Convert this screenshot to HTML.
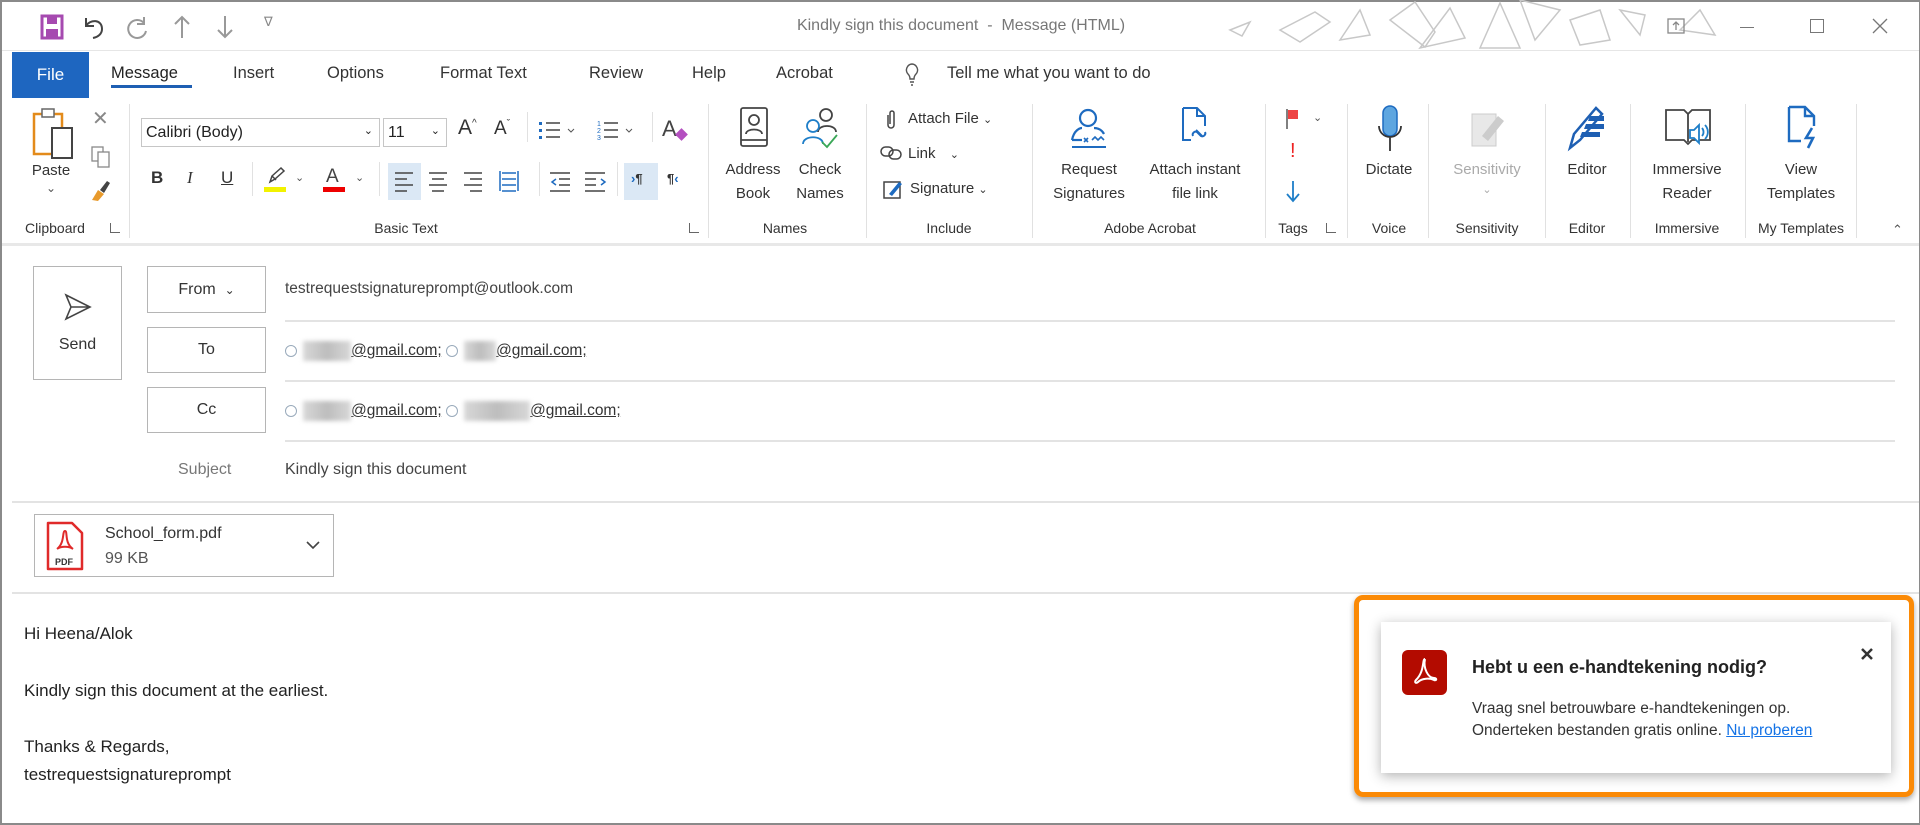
<!DOCTYPE html>
<html><head><meta charset="utf-8">
<style>
*{margin:0;padding:0;box-sizing:border-box}
body{width:1920px;height:825px;overflow:hidden;background:#fff;font-family:"Liberation Sans",sans-serif;color:#262626;position:relative}
.a{position:absolute;white-space:nowrap}
.c{transform:translateX(-50%);text-align:center}
.t{font-size:16.5px;color:#333;top:64px}
.rl{font-size:15px;color:#333;line-height:24px}
.gl{font-size:14px;color:#333;top:220px}
.sep{position:absolute;width:1px;background:#e1e1e1;top:104px;height:134px}
.hl{position:absolute;height:2px;background:#e3e3e3}
.box{position:absolute;border:1px solid #b5b5b5;background:#fff;font-size:16px;color:#333;display:flex;align-items:center;justify-content:center}
.blur{display:inline-block;height:20px;background:linear-gradient(90deg,#d8d8d8,#bdbdbd,#d8d8d8);filter:blur(2px);vertical-align:middle}
.rc{display:inline-block;width:12px;height:12px;border:1px solid #9ab;border-radius:50%;vertical-align:middle;margin-right:6px}
.em{text-decoration:underline;color:#333}
</style></head><body>
<div class="a" style="left:0;top:0;width:1920px;height:825px;border:2px solid #8a8a8a;border-right-width:1px"></div>

<svg class="a" style="left:40px;top:14px" width="24" height="26" viewBox="0 0 24 26"><rect x="2" y="2" width="20" height="22" fill="#fff" stroke="#a64ab0" stroke-width="3"/><rect x="7" y="3" width="10" height="7" fill="#a64ab0"/><rect x="6" y="15" width="12" height="8" fill="#a64ab0"/></svg>
<svg class="a" style="left:82px;top:14px" width="24" height="26" viewBox="0 0 24 26" fill="none" stroke="#444" stroke-width="2"><path d="M4 4v8h8"/><path d="M4 12c4-7 16-7 16 3 0 5-4 8-9 9"/></svg>
<svg class="a" style="left:126px;top:14px" width="24" height="26" viewBox="0 0 24 26" fill="none" stroke="#999" stroke-width="2"><path d="M18 3v7h-7"/><path d="M18 9A9 9 0 1 0 20 17"/></svg>
<svg class="a" style="left:172px;top:14px" width="20" height="26" viewBox="0 0 20 26" fill="none" stroke="#999" stroke-width="2"><path d="M10 24V3M3 10l7-7 7 7"/></svg>
<svg class="a" style="left:215px;top:14px" width="20" height="26" viewBox="0 0 20 26" fill="none" stroke="#999" stroke-width="2"><path d="M10 2v21M3 16l7 7 7-7"/></svg>
<div class="a" style="left:264px;top:14px;font-size:13px;color:#888">&#8711;</div>
<div class="a c" style="left:961px;top:17px;font-size:16px;color:#777">Kindly sign this document &nbsp;- &nbsp;Message (HTML)</div>
<svg class="a" style="left:1220px;top:0" width="640" height="50" viewBox="0 0 640 50" fill="none" stroke="#c8c8c8" stroke-width="1.5"><path d="M10 30l20-8-8 14zM60 30l35-18 15 10-30 20zM120 40l20-30 10 25zM170 20l25-18 20 30-10 15z"/><path d="M260 48l20-45 20 45zM300 0l15 40 25-30zM200 48l30-40 15 30z"/><path d="M350 20l30-10 10 30-30 5zM400 10l25 5-5 20zM460 30l20-20 15 25z"/></svg>
<svg class="a" style="left:1666px;top:16px" width="20" height="20" viewBox="0 0 20 20" fill="none" stroke="#888" stroke-width="1.3"><rect x="2" y="3" width="16" height="14"/><path d="M10 14V6M7 9l3-3 3 3"/></svg>
<div class="a" style="left:1740px;top:27px;width:14px;height:1px;background:#777"></div>
<div class="a" style="left:1810px;top:19px;width:14px;height:14px;border:1px solid #777"></div>
<svg class="a" style="left:1872px;top:18px" width="16" height="16" viewBox="0 0 16 16" stroke="#777" stroke-width="1.3"><path d="M1 1l14 14M15 1L1 15"/></svg>
<div class="hl" style="left:2px;top:50px;width:1917px;height:1px;background:#e6e6e6"></div>

<div class="a" style="left:12px;top:52px;width:77px;height:46px;background:#1e66c0;color:#fff;font-size:17px;display:flex;align-items:center;justify-content:center">File</div>
<div class="a t" style="left:111px;color:#222">Message</div>
<div class="a" style="left:111px;top:85px;width:81px;height:3px;background:#1e5fb3"></div>
<div class="a t" style="left:233px">Insert</div>
<div class="a t" style="left:327px">Options</div>
<div class="a t" style="left:440px">Format Text</div>
<div class="a t" style="left:589px">Review</div>
<div class="a t" style="left:692px">Help</div>
<div class="a t" style="left:776px">Acrobat</div>
<svg class="a" style="left:903px;top:62px" width="18" height="24" viewBox="0 0 18 24" fill="none" stroke="#555" stroke-width="1.4"><path d="M9 2a6 6 0 0 0-4 10c1 1 2 3 2 5h4c0-2 1-4 2-5A6 6 0 0 0 9 2zM7 20h4M8 23h2"/></svg>
<div class="a t" style="left:947px">Tell me what you want to do</div>

<svg class="a" style="left:32px;top:106px" width="46" height="56" viewBox="0 0 46 56" fill="none"><rect x="2" y="8" width="28" height="40" stroke="#e38b1b" stroke-width="2.5"/><rect x="10" y="3" width="12" height="8" fill="#fff" stroke="#666" stroke-width="1.5"/><rect x="20" y="22" width="20" height="30" fill="#fff" stroke="#444" stroke-width="2"/></svg>
<div class="a rl c" style="left:51px;top:159px">Paste</div>
<div class="a c" style="left:51px;top:181px;font-size:12px;color:#555">&#8964;</div>
<div class="a" style="left:92px;top:106px;font-size:20px;color:#888">&#10005;</div>
<svg class="a" style="left:90px;top:145px" width="22" height="24" viewBox="0 0 22 24" fill="none" stroke="#888" stroke-width="1.3"><rect x="2" y="2" width="11" height="14"/><rect x="8" y="7" width="11" height="15" fill="#fff"/></svg>
<svg class="a" style="left:88px;top:178px" width="24" height="24" viewBox="0 0 24 24"><path d="M4 22l6-10 6 4-6 7z" fill="#e89a2c"/><path d="M12 12l7-9 3 2-6 10z" fill="#444"/></svg>
<div class="a gl c" style="left:55px">Clipboard</div>
<div class="a" style="left:110px;top:223px;width:10px;height:10px;border-left:1px solid #666;border-bottom:1px solid #666"></div>
<div class="sep" style="left:129px"></div>

<div class="a" style="left:141px;top:118px;width:239px;height:29px;border:1px solid #c6c6c6;font-size:16px;padding:5px 4px;color:#222">Calibri (Body)<span style="position:absolute;right:6px;top:5px;font-size:11px">&#8964;</span></div>
<div class="a" style="left:383px;top:118px;width:64px;height:29px;border:1px solid #c6c6c6;font-size:16px;padding:5px 4px;color:#222">11<span style="position:absolute;right:6px;top:5px;font-size:11px">&#8964;</span></div>
<div class="a" style="left:458px;top:116px;font-size:21px;color:#333">A<sup style="font-size:10px">^</sup></div>
<div class="a" style="left:494px;top:118px;font-size:19px;color:#333">A<sup style="font-size:10px">&#711;</sup></div>
<div class="sep" style="left:527px;top:112px;height:30px"></div>
<svg class="a" style="left:538px;top:118px" width="40" height="26" viewBox="0 0 40 26"><g fill="#1e6bc0"><rect x="1" y="4" width="3" height="3"/><rect x="1" y="11" width="3" height="3"/><rect x="1" y="18" width="3" height="3"/></g><g stroke="#444" stroke-width="1.5"><path d="M8 5h14M8 12h14M8 19h14"/></g><path d="M30 11l3 3 3-3" stroke="#555" fill="none"/></svg>
<svg class="a" style="left:596px;top:118px" width="40" height="26" viewBox="0 0 40 26"><g fill="#1e6bc0" font-size="7" font-family="Liberation Sans"><text x="1" y="8">1</text><text x="1" y="15">2</text><text x="1" y="22">3</text></g><g stroke="#444" stroke-width="1.5"><path d="M8 5h14M8 12h14M8 19h14"/></g><path d="M30 11l3 3 3-3" stroke="#555" fill="none"/></svg>
<div class="sep" style="left:652px;top:112px;height:30px"></div>
<div class="a" style="left:662px;top:116px;font-size:22px;color:#444">A</div>
<div class="a" style="left:677px;top:130px;width:9px;height:9px;background:#b44fc0;transform:rotate(45deg)"></div>

<div class="a" style="left:151px;top:168px;font-size:17px;font-weight:bold;color:#333">B</div>
<div class="a" style="left:187px;top:168px;font-size:17px;font-style:italic;font-family:'Liberation Serif',serif;color:#333">I</div>
<div class="a" style="left:221px;top:168px;font-size:17px;text-decoration:underline;color:#333">U</div>
<div class="sep" style="left:252px;top:162px;height:34px"></div>
<svg class="a" style="left:264px;top:166px" width="22" height="20" viewBox="0 0 22 20" fill="none" stroke="#444" stroke-width="1.5"><path d="M6 16l2-6 9-8 3 3-9 8zM8 10l4 4"/></svg>
<div class="a" style="left:264px;top:187px;width:22px;height:5px;background:#f2f200"></div>
<div class="a" style="left:295px;top:171px;font-size:11px;color:#555">&#8964;</div>
<div class="a" style="left:326px;top:166px;font-size:19px;color:#444">A</div>
<div class="a" style="left:323px;top:187px;width:22px;height:5px;background:#e00"></div>
<div class="a" style="left:355px;top:171px;font-size:11px;color:#555">&#8964;</div>
<div class="sep" style="left:379px;top:162px;height:34px"></div>
<div class="a" style="left:388px;top:163px;width:33px;height:37px;background:#dbe8f5"></div>
<svg class="a" style="left:394px;top:170px" width="140" height="22" viewBox="0 0 140 22" stroke="#444" stroke-width="1.5"><path d="M1 3h18M1 9h12M1 15h18M1 21h12"/><path d="M35 3h18M38 9h12M35 15h18M38 21h12"/><path d="M70 3h18M76 9h12M70 15h18M76 21h12"/><path d="M106 1v20M124 1v20M108 3h14M108 9h14M108 15h14M108 21h14" stroke="#1e6bc0"/></svg>
<div class="sep" style="left:539px;top:162px;height:34px"></div>
<svg class="a" style="left:549px;top:170px" width="60" height="22" viewBox="0 0 60 22" stroke="#444" stroke-width="1.5" fill="none"><path d="M1 3h20M10 9h11M10 15h11M1 21h20"/><path d="M7 9l-4 3 4 3" stroke="#1e6bc0"/><path d="M36 3h20M36 9h11M36 15h11M36 21h20"/><path d="M52 9l4 3-4 3" stroke="#1e6bc0"/></svg>
<div class="sep" style="left:617px;top:162px;height:34px"></div>
<div class="a" style="left:624px;top:163px;width:34px;height:37px;background:#dbe8f5"></div>
<div class="a" style="left:631px;top:171px;font-size:13px;color:#1e6bc0;font-weight:bold">&rsaquo;<span style="color:#333">&para;</span></div>
<div class="a" style="left:667px;top:171px;font-size:13px;color:#333;font-weight:bold">&para;<span style="color:#1e6bc0">&lsaquo;</span></div>
<div class="a gl c" style="left:406px">Basic Text</div>
<div class="a" style="left:689px;top:223px;width:10px;height:10px;border-left:1px solid #666;border-bottom:1px solid #666"></div>
<div class="sep" style="left:708px"></div>

<svg class="a" style="left:738px;top:106px" width="32" height="44" viewBox="0 0 32 44" fill="none" stroke="#444" stroke-width="1.8"><rect x="3" y="2" width="26" height="38" rx="2"/><path d="M3 34h26"/><circle cx="16" cy="14" r="5"/><path d="M8 28c0-6 16-6 16 0"/></svg>
<div class="a rl c" style="left:753px;top:158px">Address<br>Book</div>
<svg class="a" style="left:800px;top:106px" width="40" height="44" viewBox="0 0 40 44" fill="none" stroke-width="1.8"><circle cx="26" cy="9" r="6" stroke="#444"/><path d="M18 26c0-8 18-8 18 0" stroke="#444"/><circle cx="13" cy="20" r="6" stroke="#1e7ec8"/><path d="M3 38c0-9 20-9 20 0" stroke="#1e7ec8"/><path d="M22 36l5 5 10-12" stroke="#3aa757"/></svg>
<div class="a rl c" style="left:820px;top:158px">Check<br>Names</div>
<div class="a gl c" style="left:785px">Names</div>
<div class="sep" style="left:866px"></div>

<svg class="a" style="left:884px;top:109px" width="14" height="22" viewBox="0 0 14 22" fill="none" stroke="#444" stroke-width="1.5"><path d="M4 6v10a3 3 0 0 0 6 0V4a2 2 0 0 0-4 0v11"/></svg>
<div class="a rl" style="left:908px;top:107px">Attach File <span style="font-size:11px">&#8964;</span></div>
<svg class="a" style="left:880px;top:145px" width="24" height="16" viewBox="0 0 24 16" fill="none" stroke="#444" stroke-width="1.5"><rect x="1" y="2" width="12" height="9" rx="4.5"/><rect x="9" y="5" width="12" height="9" rx="4.5"/></svg>
<div class="a rl" style="left:908px;top:142px">Link <span style="font-size:11px;margin-left:10px">&#8964;</span></div>
<svg class="a" style="left:883px;top:178px" width="22" height="22" viewBox="0 0 22 22" fill="none"><rect x="1" y="4" width="16" height="16" stroke="#444" stroke-width="1.5"/><path d="M6 16l10-12 3 2-10 12z" fill="#1e6bc0"/></svg>
<div class="a rl" style="left:910px;top:177px">Signature <span style="font-size:11px">&#8964;</span></div>
<div class="a gl c" style="left:949px">Include</div>
<div class="sep" style="left:1032px"></div>

<svg class="a" style="left:1068px;top:106px" width="44" height="44" viewBox="0 0 44 44" fill="none" stroke="#1e6bc0" stroke-width="2.2"><circle cx="20" cy="12" r="8"/><path d="M4 34c2-10 8-12 10-12M26 22c4 0 8 2 10 6"/><path d="M4 34h10"/><path d="M16 32l4 4M20 32l-4 4M24 34l3-3 3 3 3-3 3 3" stroke-width="1.6"/><path d="M4 41h34" stroke-width="2"/></svg>
<div class="a rl c" style="left:1089px;top:158px">Request<br>Signatures</div>
<svg class="a" style="left:1180px;top:106px" width="30" height="44" viewBox="0 0 30 44" fill="none" stroke="#1e6bc0" stroke-width="2"><path d="M3 2h14l8 8v10M3 2v32h8M17 2v8h8"/><path d="M16 24l6 6M13 30a3 3 0 0 1 4-4l2 2M25 26a3 3 0 0 1-4 4l-2-2"/></svg>
<div class="a rl c" style="left:1195px;top:158px">Attach instant<br>file link</div>
<div class="a gl c" style="left:1150px">Adobe Acrobat</div>
<div class="sep" style="left:1265px"></div>

<svg class="a" style="left:1285px;top:108px" width="16" height="22" viewBox="0 0 16 22"><path d="M2 1v20" stroke="#555" stroke-width="1.5"/><path d="M3 2h10v9H3z" fill="#ee4444"/></svg>
<div class="a" style="left:1313px;top:111px;font-size:11px;color:#555">&#8964;</div>
<div class="a" style="left:1290px;top:140px;font-size:20px;color:#e22">!</div>
<svg class="a" style="left:1285px;top:179px" width="16" height="24" viewBox="0 0 16 24" fill="none" stroke="#1e7ec8" stroke-width="1.8"><path d="M8 2v20M2 15l6 7 6-7"/></svg>
<div class="a gl c" style="left:1293px">Tags</div>
<div class="a" style="left:1326px;top:223px;width:10px;height:10px;border-left:1px solid #666;border-bottom:1px solid #666"></div>
<div class="sep" style="left:1347px"></div>

<svg class="a" style="left:1377px;top:104px" width="26" height="50" viewBox="0 0 26 50"><rect x="6" y="2" width="14" height="30" rx="7" fill="#5ea6e0" stroke="#1e6bc0" stroke-width="1.5"/><path d="M2 22a11 11 0 0 0 22 0M13 33v14" fill="none" stroke="#333" stroke-width="1.8"/></svg>
<div class="a rl c" style="left:1389px;top:158px">Dictate</div>
<div class="a gl c" style="left:1389px">Voice</div>
<div class="sep" style="left:1428px"></div>

<svg class="a" style="left:1468px;top:106px" width="40" height="44" viewBox="0 0 40 44"><rect x="4" y="8" width="24" height="32" fill="#e8e8e8" stroke="#ccc"/><path d="M14 30l16-20 6 5-16 20z" fill="#ccc"/></svg>
<div class="a rl c" style="left:1487px;top:158px;color:#aaa">Sensitivity</div>
<div class="a c" style="left:1487px;top:183px;font-size:11px;color:#aaa">&#8964;</div>
<div class="a gl c" style="left:1487px">Sensitivity</div>
<div class="sep" style="left:1545px"></div>

<svg class="a" style="left:1564px;top:104px" width="44" height="48" viewBox="0 0 44 48"><path d="M6 44l4-14L32 4l6 6L16 36z" fill="none" stroke="#1e5fb3" stroke-width="2.5"/><path d="M22 20h18v5H20zM18 28h18v5H16zM26 12h14v5H24z" fill="#1e5fb3"/></svg>
<div class="a rl c" style="left:1587px;top:158px">Editor</div>
<div class="a gl c" style="left:1587px">Editor</div>
<div class="sep" style="left:1630px"></div>

<svg class="a" style="left:1664px;top:106px" width="48" height="44" viewBox="0 0 48 44" fill="none" stroke-width="1.8"><path d="M2 4h18l4 4 4-4h18v30H28l-4 4-4-4H2z" stroke="#444"/><path d="M24 8v28" stroke="#444"/><path d="M26 24h4l5-5v18l-5-5h-4z" fill="#fff" stroke="#1e7ec8"/><path d="M38 22a6 6 0 0 1 0 8M41 19a10 10 0 0 1 0 14" stroke="#1e7ec8"/></svg>
<div class="a rl c" style="left:1687px;top:158px">Immersive<br>Reader</div>
<div class="a gl c" style="left:1687px">Immersive</div>
<div class="sep" style="left:1745px"></div>

<svg class="a" style="left:1786px;top:104px" width="34" height="46" viewBox="0 0 34 46" fill="none" stroke="#1e6bc0" stroke-width="2.4"><path d="M3 3h16l9 9v10M3 3v34h12M19 3v9h9"/><path d="M26 24l-6 10h7l-5 10" stroke-width="2.6"/></svg>
<div class="a rl c" style="left:1801px;top:158px">View<br>Templates</div>
<div class="a gl c" style="left:1801px">My Templates</div>
<div class="sep" style="left:1856px"></div>
<div class="a" style="left:1892px;top:222px;font-size:13px;color:#555">&#8963;</div>

<div class="hl" style="left:2px;top:243px;width:1917px;height:3px;background:#e8e8e8"></div>

<div class="box" style="left:33px;top:266px;width:89px;height:114px;flex-direction:column">
<svg width="30" height="30" viewBox="0 0 30 30" fill="none" stroke="#444" stroke-width="1.6" style="margin-bottom:14px"><path d="M3 3l24 12L3 27l5-12zM8 15h19"/></svg>Send</div>
<div class="box" style="left:147px;top:266px;width:119px;height:47px">From &nbsp;<span style="font-size:12px">&#8964;</span></div>
<div class="a" style="left:285px;top:280px;font-size:15.5px;color:#444">testrequestsignatureprompt@outlook.com</div>
<div class="hl" style="left:285px;top:320px;width:1610px"></div>
<div class="box" style="left:147px;top:327px;width:119px;height:46px">To</div>
<div class="a" style="left:285px;top:341px;font-size:15.5px"><span class="rc"></span><span class="blur" style="width:48px"></span><span class="em">@gmail.com;</span> <span class="rc"></span><span class="blur" style="width:32px"></span><span class="em">@gmail.com;</span></div>
<div class="hl" style="left:285px;top:380px;width:1610px"></div>
<div class="box" style="left:147px;top:387px;width:119px;height:46px">Cc</div>
<div class="a" style="left:285px;top:401px;font-size:15.5px"><span class="rc"></span><span class="blur" style="width:48px"></span><span class="em">@gmail.com;</span> <span class="rc"></span><span class="blur" style="width:66px"></span><span class="em">@gmail.com;</span></div>
<div class="hl" style="left:285px;top:440px;width:1610px"></div>
<div class="a" style="left:178px;top:461px;font-size:16px;color:#777">Subject</div>
<div class="a" style="left:285px;top:461px;font-size:16px;color:#444">Kindly sign this document</div>
<div class="hl" style="left:12px;top:501px;width:1907px"></div>

<div class="a" style="left:34px;top:514px;width:300px;height:63px;border:1px solid #b5b5b5"></div>
<svg class="a" style="left:46px;top:521px" width="38" height="50" viewBox="0 0 38 50"><path d="M2 2h24l10 10v36H2z" fill="#fff" stroke="#e02a2a" stroke-width="2.5" stroke-linejoin="round"/><path d="M19 10c-3 0 0 12-8 18M19 10c3 0-1 12 8 18M11 28c4-3 12-3 16 0" fill="none" stroke="#e02a2a" stroke-width="2"/><text x="9" y="44" font-size="9" font-weight="bold" fill="#333" font-family="Liberation Sans">PDF</text></svg>
<div class="a" style="left:105px;top:525px;font-size:16px;color:#333">School_form.pdf</div>
<div class="a" style="left:105px;top:550px;font-size:16px;color:#555">99 KB</div>
<svg class="a" style="left:306px;top:540px" width="14" height="10" viewBox="0 0 14 10" fill="none" stroke="#444" stroke-width="1.6"><path d="M1 2l6 6 6-6"/></svg>
<div class="hl" style="left:12px;top:592px;width:1907px"></div>

<div class="a" style="left:24px;top:624px;font-size:17px;color:#222">Hi Heena/Alok</div>
<div class="a" style="left:24px;top:681px;font-size:17px;color:#222">Kindly sign this document at the earliest.</div>
<div class="a" style="left:24px;top:737px;font-size:17px;color:#222">Thanks &amp; Regards,</div>
<div class="a" style="left:24px;top:765px;font-size:17px;color:#222">testrequestsignatureprompt</div>

<div class="a" style="left:1354px;top:595px;width:560px;height:202px;border:5px solid #fb8a06;border-radius:9px;box-shadow:0 3px 6px rgba(0,0,0,.35)"></div>
<div class="a" style="left:1381px;top:622px;width:510px;height:151px;background:#fff;box-shadow:0 3px 12px rgba(0,0,0,.3)"></div>
<div class="a" style="left:1402px;top:650px;width:45px;height:45px;background:#b30b00;border-radius:6px"></div>
<svg class="a" style="left:1410px;top:656px" width="30" height="32" viewBox="0 0 30 32" fill="none" stroke="#fff" stroke-width="2"><path d="M15 3c-3 0 0 12-9 21-2 2 0 4 2 2 4-4 12-4 16-2 3 1 3-2 0-2-6 0-11-10-9-19"/></svg>
<div class="a" style="left:1472px;top:657px;font-size:18px;font-weight:bold;color:#222">Hebt u een e-handtekening nodig?</div>
<div class="a" style="left:1472px;top:698px;font-size:15.5px;color:#333;line-height:22px">Vraag snel betrouwbare e-handtekeningen op.<br>Onderteken bestanden gratis online. <span style="color:#1473e6;text-decoration:underline">Nu proberen</span></div>
<svg class="a" style="left:1860px;top:647px" width="14" height="14" viewBox="0 0 14 14" stroke="#333" stroke-width="2.5"><path d="M2 2l10 10M12 2L2 12"/></svg>
</body></html>
